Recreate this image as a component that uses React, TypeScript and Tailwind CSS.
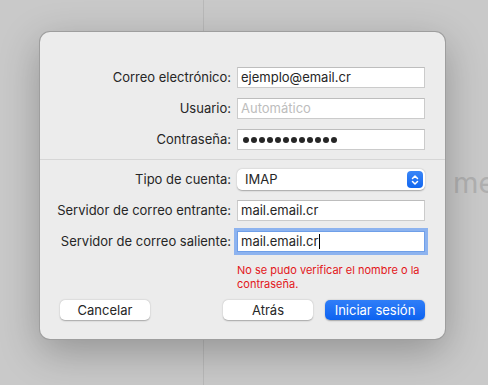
import React from "react";

const font = { fontFamily: "Inter, 'Noto Sans', sans-serif" };

function Field({ children, focused }: { children?: React.ReactNode; focused?: boolean }) {
  return (
    <div
      className={
        "h-[21px] w-[188px] bg-white flex items-center pl-[3px] text-[13px] text-[#262626] leading-none " +
        (focused
          ? "border border-[#6f9fe8] shadow-[0_0_0_3px_rgba(110,160,240,0.75)]"
          : "border border-[#cbcbcb] border-t-[#bdbdbd]")
      }
    >
      {children}
    </div>
  );
}

function Label({ children }: { children: React.ReactNode }) {
  return <div className="text-right text-[13px] text-[#262626] leading-none pr-[6px]">{children}</div>;
}

function Row({ label, children, className }: { label: string; children: React.ReactNode; className?: string }) {
  return (
    <div className={"flex items-center " + (className ?? "")}>
      <div className="w-[197px]">
        <Label>{label}</Label>
      </div>
      {children}
    </div>
  );
}

export default function App() {
  return (
    <div className="relative w-[488px] h-[385px] overflow-hidden bg-[#c9c9c9]" style={font}>
      <div className="absolute left-[203px] top-0 h-full w-px bg-[#b9b9b9]" />
      <div className="absolute left-[453px] top-[168px] text-[29px] leading-none text-[#b0b0b0] whitespace-nowrap">me</div>
      <div className="relative ml-[40px] mt-[32px] w-[405px] h-[307px] rounded-[10px] bg-[#ececec] ring-1 ring-[#9e9e9e] shadow-[0_12px_40px_rgba(0,0,0,0.28)] pt-[35px]">
        <Row label="Correo electrónico:">
          <Field>ejemplo@email.cr</Field>
        </Row>
        <Row label="Usuario:" className="mt-[10px]">
          <Field>
            <span className="text-[#bdbdbd]">Automático</span>
          </Field>
        </Row>
        <Row label="Contraseña:" className="mt-[10px]">
          <Field>
            <div className="flex gap-[2px] pl-[2px]">
              {Array.from({ length: 12 }).map((_, i) => (
                <span key={i} className="w-[6px] h-[6px] rounded-full bg-[#262626]" />
              ))}
            </div>
          </Field>
        </Row>
        <div className="mt-[9px] h-px bg-[#d6d6d6]" />
        <Row label="Tipo de cuenta:" className="mt-[9px]">
          <div className="h-[21px] w-[188px] rounded-[5px] bg-white shadow-[0_0.5px_1.5px_rgba(0,0,0,0.3)] flex items-center justify-between pl-[8px] pr-[2px]">
            <span className="text-[13px] text-[#262626] leading-none">IMAP</span>
            <div className="w-[16px] h-[17px] rounded-[4px] bg-gradient-to-b from-[#3a86f7] to-[#0f66f0] flex items-center justify-center">
              <svg width="8" height="12" viewBox="0 0 8 12" fill="none" stroke="white" strokeWidth="1.5" strokeLinecap="round" strokeLinejoin="round">
                <path d="M1.5 4.5 L4 2 L6.5 4.5" />
                <path d="M1.5 7.5 L4 10 L6.5 7.5" />
              </svg>
            </div>
          </div>
        </Row>
        <Row label="Servidor de correo entrante:" className="mt-[10px]">
          <Field>mail.email.cr</Field>
        </Row>
        <Row label="Servidor de correo saliente:" className="mt-[10px]">
          <Field focused>
            <span>mail.email.cr</span>
            <span className="ml-px w-px h-[15px] bg-black" />
          </Field>
        </Row>
        <div className="mt-[11px] ml-[197px] whitespace-nowrap text-[11px] leading-[14px] text-[#e3161a]">
          No se pudo verificar el nombre o la
          <br />
          contraseña.
        </div>
        <div className="mt-[9px] flex items-center pl-[20px] pr-[20px]">
          <button className="h-[20px] w-[90px] rounded-[5px] bg-white shadow-[0_0.5px_1.5px_rgba(0,0,0,0.3)] text-[13px] text-[#262626] leading-none">
            Cancelar
          </button>
          <button className="ml-auto h-[20px] w-[90px] rounded-[5px] bg-white shadow-[0_0.5px_1.5px_rgba(0,0,0,0.3)] text-[13px] text-[#262626] leading-none">
            Atrás
          </button>
          <button className="ml-[12px] h-[20px] w-[100px] rounded-[5px] bg-gradient-to-b from-[#2f7ef8] to-[#0b62f0] shadow-[0_0.5px_1.5px_rgba(0,0,0,0.3)] text-[13px] text-white leading-none">
            Iniciar sesión
          </button>
        </div>
      </div>
    </div>
  );
}
